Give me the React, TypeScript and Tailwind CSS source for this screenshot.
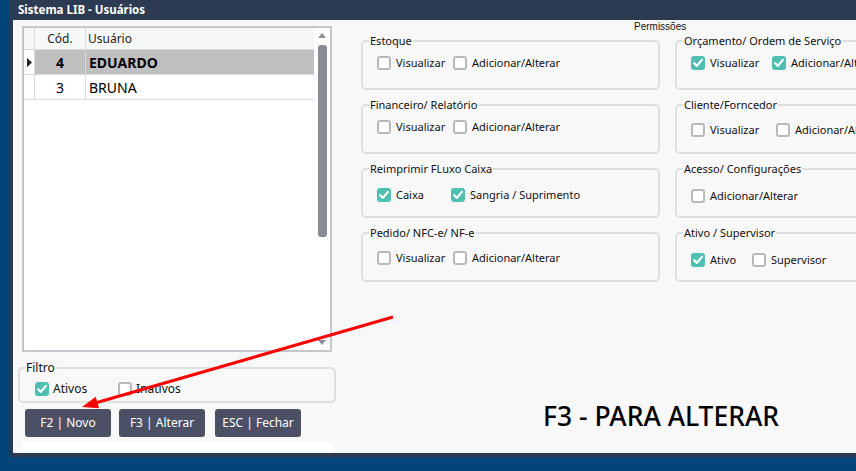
import React from 'react';

type Item = { label: string; checked?: boolean; w?: string };
type Group = { title: string; mt: string; items: Item[] };

const leftGroups: Group[] = [
  { title: 'Estoque', mt: 'mt-[8px]', items: [{ label: 'Visualizar', w: 'w-[76px]' }, { label: 'Adicionar/Alterar' }] },
  { title: 'Financeiro/ Relatório', mt: 'mt-[8px]', items: [{ label: 'Visualizar', w: 'w-[76px]' }, { label: 'Adicionar/Alterar' }] },
  { title: 'Reimprimir FLuxo Caixa', mt: 'mt-[12px]', items: [{ label: 'Caixa', checked: true, w: 'w-[74px]' }, { label: 'Sangria / Suprimento', checked: true }] },
  { title: 'Pedido/ NFC-e/ NF-e', mt: 'mt-[11px]', items: [{ label: 'Visualizar', w: 'w-[76px]' }, { label: 'Adicionar/Alterar' }] },
];

const rightGroups: Group[] = [
  { title: 'Orçamento/ Ordem de Serviço', mt: 'mt-[8px]', items: [{ label: 'Visualizar', checked: true, w: 'w-[81px]' }, { label: 'Adicionar/Alterar', checked: true }] },
  { title: 'Cliente/Forncedor', mt: 'mt-[11px]', items: [{ label: 'Visualizar', w: 'w-[85px]' }, { label: 'Adicionar/Alterar' }] },
  { title: 'Acesso/ Configurações', mt: 'mt-[13px]', items: [{ label: 'Adicionar/Alterar' }] },
  { title: 'Ativo / Supervisor', mt: 'mt-[13px]', items: [{ label: 'Ativo', checked: true, w: 'w-[61px]' }, { label: 'Supervisor' }] },
];

function Check({ checked }: { checked?: boolean }) {
  if (checked) {
    return (
      <span className="w-[14px] h-[14px] rounded-[3px] bg-[#4ebfb1] flex items-center justify-center shrink-0">
        <svg width="14" height="14" viewBox="0 0 14 14">
          <path d="M3.2 7.2 L5.9 9.9 L10.9 3.9" fill="none" stroke="white" strokeWidth="2.2" strokeLinecap="round" strokeLinejoin="round" />
        </svg>
      </span>
    );
  }
  return <span className="w-[14px] h-[14px] rounded-[3px] border-2 border-[#b8b9bb] bg-white shrink-0" />;
}

function CheckItem({ item }: { item: Item }) {
  return (
    <div className={`flex items-center gap-[5px] h-[14px] shrink-0 whitespace-nowrap ${item.w ?? ''}`}>
      <Check checked={item.checked} />
      <span className="text-[11px] leading-[14px] text-[#111]">{item.label}</span>
    </div>
  );
}

function GroupBox({ g }: { g: Group }) {
  return (
    <fieldset className="h-[56px] border-2 border-[#dddfe0] rounded-[5px] min-w-0">
      <legend className="ml-[6px] px-[1px] text-[11px] leading-[14px] text-[#111]">{g.title}</legend>
      <div className={`flex pl-[14px] ${g.mt}`}>
        {g.items.map((it) => (
          <CheckItem key={it.label} item={it} />
        ))}
      </div>
    </fieldset>
  );
}

export default function App() {
  return (
    <div className="relative w-[856px] h-[471px] overflow-hidden bg-[#03457a] font-['Noto_Sans',sans-serif]">
      <div className="ml-[10px] h-[457px] bg-[#2c3b51] flex flex-col pl-[3px] pb-[4px]">
        <div className="h-[20px] pl-[5px] flex items-center text-white font-bold text-[11.5px]">Sistema LIB - Usuários</div>
        <div className="flex-1 bg-[#f8f8f8] flex overflow-hidden">
          {/* left column */}
          <div className="w-[327px] shrink-0 flex flex-col pt-[6px]">
            <div className="ml-[9px] w-[310px] h-[326px] border-2 border-[#c4c7cc] bg-white flex">
              <div className="flex-1 flex flex-col">
                <div className="h-[22px] flex bg-[#f6f7f7] border-b border-[#dadada] text-[12px] text-[#222]">
                  <div className="w-[11px] border-r border-[#dadada]" />
                  <div className="w-[51px] border-r border-[#dadada] flex items-center justify-center">Cód.</div>
                  <div className="flex-1 flex items-center pl-[2px]">Usuário</div>
                </div>
                <div className="h-[25px] flex border-b border-[#dadada] text-[14px]">
                  <div className="w-[11px] border-r border-[#dadada] flex items-center justify-center">
                    <svg width="5" height="9" viewBox="0 0 5 9">
                      <path d="M0 0 L5 4.5 L0 9 Z" fill="#222" />
                    </svg>
                  </div>
                  <div className="w-[51px] bg-[#c0c0c0] border-r border-[#dadada] flex items-center justify-center font-bold">4</div>
                  <div className="flex-1 bg-[#c0c0c0] flex items-center pl-[3px] font-bold">EDUARDO</div>
                </div>
                <div className="h-[25px] flex border-b border-[#dadada] text-[14px]">
                  <div className="w-[11px] border-r border-[#dadada]" />
                  <div className="w-[51px] border-r border-[#dadada] flex items-center justify-center">3</div>
                  <div className="flex-1 flex items-center pl-[3px]">BRUNA</div>
                </div>
              </div>
              <div className="w-[16px] flex flex-col items-center pt-[5px] pb-[5px]">
                <svg width="8" height="5" viewBox="0 0 8 5">
                  <path d="M0 5 L4 0 L8 5 Z" fill="#8a8f97" />
                </svg>
                <div className="mt-[7px] w-[9px] h-[192px] rounded-[3px] bg-[#868b94]" />
                <div className="flex-1" />
                <svg width="8" height="5" viewBox="0 0 8 5">
                  <path d="M0 0 L8 0 L4 5 Z" fill="#8a8f97" />
                </svg>
              </div>
            </div>

            <fieldset className="mt-[9px] ml-[5px] w-[318px] h-[42px] border-2 border-[#dddfe0] rounded-[5px]">
              <legend className="ml-[5px] px-[1px] text-[12px] leading-[14px] text-[#111]">Filtro</legend>
              <div className="flex mt-[7px] pl-[15px]">
                <div className="w-[83px] flex items-center gap-[4px] h-[14px]">
                  <Check checked />
                  <span className="text-[12px] text-[#111]">Ativos</span>
                </div>
                <div className="flex items-center gap-[4px] h-[14px]">
                  <Check />
                  <span className="text-[12px] text-[#111]">Inativos</span>
                </div>
              </div>
            </fieldset>

            <div className="mt-[6px] ml-[12px] flex">
              <button className="w-[86px] h-[28px] rounded-[3px] bg-[#4b5065] text-white text-[12px]">F2 | Novo</button>
              <button className="ml-[8px] w-[86px] h-[28px] rounded-[3px] bg-[#4b5065] text-white text-[12px]">F3 | Alterar</button>
              <button className="ml-[10px] w-[86px] h-[28px] rounded-[3px] bg-[#4b5065] text-white text-[12px]">ESC | Fechar</button>
            </div>
            <div className="mt-[5px] ml-[9px] w-[310px] h-[8px] bg-white" />
          </div>

          {/* right column */}
          <div className="flex-1 flex flex-col pl-[21px]">
            <div className="h-[14px] pl-[273px] text-[10px] leading-[14px] font-['Liberation_Sans',sans-serif] text-[#111]">Permissões</div>
            <div className="grid grid-cols-[299px_299px] gap-x-[15px] gap-y-[8px] grid-flow-col grid-rows-4">
              {leftGroups.map((g) => (
                <GroupBox key={g.title} g={g} />
              ))}
              {rightGroups.map((g) => (
                <GroupBox key={g.title} g={g} />
              ))}
            </div>
            <div className="mt-[118px] ml-[182px] text-[26.5px] leading-[32px] font-medium text-black whitespace-nowrap">F3 - PARA ALTERAR</div>
          </div>
        </div>
      </div>

      <svg className="absolute inset-0 pointer-events-none" width="856" height="471" viewBox="0 0 856 471">
        <line x1="393" y1="317" x2="97" y2="402.5" stroke="#ff0000" strokeWidth="3" />
        <polygon points="82,407 95.7,396.8 99.1,408.3" fill="#ff0000" />
      </svg>
    </div>
  );
}
